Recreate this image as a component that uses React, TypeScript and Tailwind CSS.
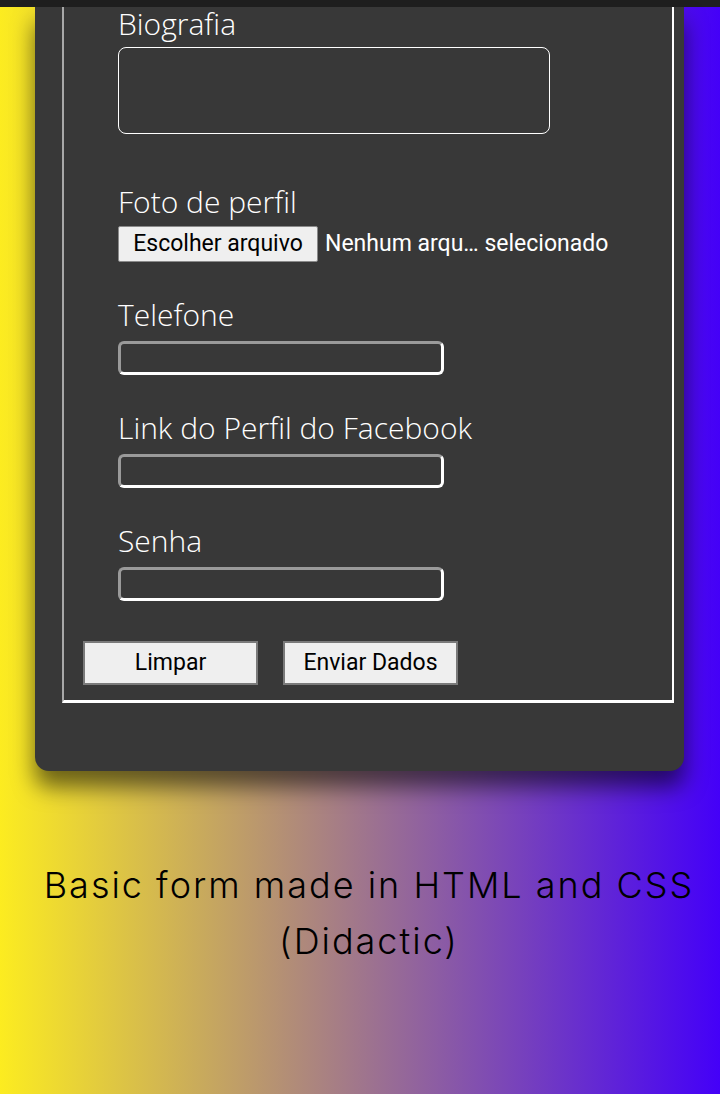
import React from 'react';

const label = "block text-[30px] leading-[34px] font-light text-white font-['Open_Sans',sans-serif]";
const field =
  'block w-[326px] h-[34px] rounded-[6px] border-[3px] border-t-[#9a9a9a] border-l-[#9a9a9a] border-r-white border-b-white bg-transparent outline-none';
const btn = 'h-[44px] w-[175px] border-2 border-[#7a7a7a] bg-[#efefef] text-[23px] text-black';

export default function App() {
  return (
    <div className="min-h-[1094px] bg-[linear-gradient(to_right,#fcec20,#4400f8)] font-['Roboto',sans-serif]">
      <div className="h-[7px] bg-[#1f1f1f]" />
      <div className="ml-[35px] w-[649px] rounded-b-[14px] bg-[#383838] pl-[27px] pr-[10px] pb-[68px] shadow-[0_16px_22px_rgba(0,0,0,0.55)]">
        <div className="border-l-2 border-l-[#a8a8a8] border-r-2 border-r-white border-b-[3px] border-b-white pb-[15px]">
          <div className="pl-[54px]">
            <label className={label}>Biografia</label>
            <textarea className="mt-[6px] block h-[87px] w-[432px] resize-none rounded-[8px] border border-white bg-transparent outline-none" />

            <label className={label + ' mt-[51px]'}>Foto de perfil</label>
            <div className="mt-[7px] flex items-center">
              <button className="h-[36px] w-[200px] rounded-[2px] border border-[#8a8a8a] bg-[#efefef] text-[23px] text-black">
                Escolher arquivo
              </button>
              <span className="ml-[7px] text-[23px] text-white">Nenhum arqu… selecionado</span>
            </div>

            <label className={label + ' mt-[36px]'}>Telefone</label>
            <input className={field + ' mt-[9px]'} />

            <label className={label + ' mt-[36px]'}>Link do Perfil do Facebook</label>
            <input className={field + ' mt-[9px]'} />

            <label className={label + ' mt-[36px]'}>Senha</label>
            <input className={field + ' mt-[9px]'} />
          </div>

          <div className="mt-[40px] flex gap-[25px] pl-[19px]">
            <button className={btn}>Limpar</button>
            <button className={btn}>Enviar Dados</button>
          </div>
        </div>
      </div>

      <p className="mt-[86px] pl-[18px] text-center text-[36px] leading-[56px] font-light tracking-[2px] text-black font-['Inter',sans-serif]">
        Basic form made in HTML and CSS
        <br />
        (Didactic)
      </p>
    </div>
  );
}
